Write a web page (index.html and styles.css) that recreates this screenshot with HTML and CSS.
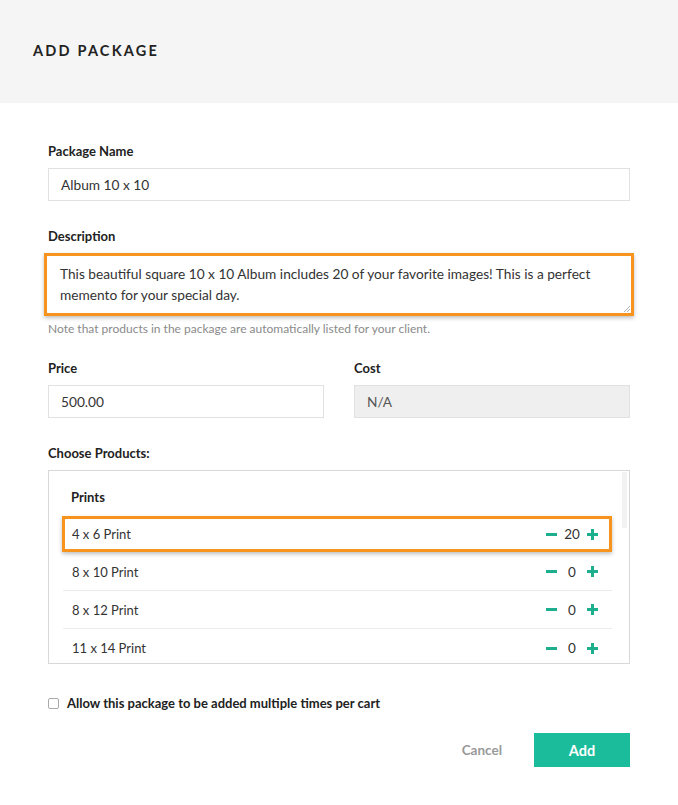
FILE: index.html
```html
<!DOCTYPE html>
<html>
<head>
<meta charset="utf-8">
<link rel="stylesheet" href="styles.css">
</head>
<body>
<div class="modal">
  <header class="header"><h1 class="title">ADD PACKAGE</h1></header>
  <main class="body">
    <div class="field">
      <label class="label">Package Name</label>
      <div class="input">Album 10 x 10</div>
    </div>
    <div class="field">
      <label class="label">Description</label>
      <div class="textarea hl">This beautiful square 10 x 10 Album includes 20 of your favorite images! This is a perfect memento for your special day.
        <svg class="grip" width="7" height="7" viewBox="0 0 7 7"><path d="M1 7L7 1M4 7L7 4" stroke="#999" stroke-width="0.8"/></svg>
      </div>
      <div class="note">Note that products in the package are automatically listed for your client.</div>
    </div>
    <div class="row2">
      <div class="field col">
        <label class="label">Price</label>
        <div class="input">500.00</div>
      </div>
      <div class="field col">
        <label class="label">Cost</label>
        <div class="input disabled">N/A</div>
      </div>
    </div>
    <div class="field">
      <label class="label">Choose Products:</label>
      <div class="products">
        <div class="scroll"></div>
        <div class="group">Prints</div>
        <div class="prod hl-row"><span>4 x 6 Print</span><span class="stepper"><span class="minus"></span><span class="qty">20</span><span class="plus"></span></span></div>
        <div class="prod"><span>8 x 10 Print</span><span class="stepper"><span class="minus"></span><span class="qty">0</span><span class="plus"></span></span></div>
        <div class="prod"><span>8 x 12 Print</span><span class="stepper"><span class="minus"></span><span class="qty">0</span><span class="plus"></span></span></div>
        <div class="prod last"><span>11 x 14 Print</span><span class="stepper"><span class="minus"></span><span class="qty">0</span><span class="plus"></span></span></div>
      </div>
    </div>
    <div class="check"><span class="box"></span><span>Allow this package to be added multiple times per cart</span></div>
    <div class="actions"><span class="cancel">Cancel</span><span class="add">Add</span></div>
  </main>
</div>
</body>
</html>
```
FILE: styles.css
```css
* { box-sizing: border-box; }
body { margin: 0; background: #fff; font-family: Lato, "Liberation Sans", sans-serif; color: #333; font-size: 13.7px; }
.modal { width: 678px; height: 805px; }
.header { background: #f5f5f5; height: 103px; padding: 42px 33px 0; }
.title { margin: 0; font-size: 14.5px; font-weight: 700; letter-spacing: 2.2px; color: #222; line-height: 18px; }
.body { padding: 40px 48px 0; }
.label { display: block; font-weight: 700; font-size: 13px; color: #222; line-height: 16px; margin-bottom: 9px; }
.input { height: 33px; border: 1px solid #e1e1e1; padding: 0 12px; line-height: 31px; font-size: 13.7px; color: #333; margin-bottom: 27px; }
.input.disabled { background: #efefef; color: #555; }
.textarea { position: relative; margin: 0 -4px; border: 3px solid #f7941d; box-shadow: 0 2px 4px rgba(0,0,0,0.25); padding: 7px 13px; height: 63px; line-height: 21px; font-size: 13.7px; color: #333; }
.grip { position: absolute; right: 1px; bottom: 1px; }
.note { font-size: 12px; color: #8a8a8a; margin-top: 5px; line-height: 16px; margin-bottom: 23px; }
.row2 { display: flex; gap: 30px; }
.col { flex: 1; }
.products { position: relative; border: 1px solid #d8d8d8; height: 194px; padding: 16px 17px 0 14px; overflow: hidden; margin-bottom: 31px; }
.scroll { position: absolute; right: 2px; top: 1px; width: 5px; height: 56px; background: #f2f2f2; }
.group { font-weight: 700; font-size: 13px; color: #222; padding-left: 8px; line-height: 20px; margin-bottom: 9px; }
.prod { display: flex; justify-content: space-between; align-items: center; height: 38px; padding: 0 14px 0 9px; border-bottom: 1px solid #ececec; font-size: 13px; color: #333; }
.prod.last { border-bottom: none; }
.hl-row { height: 36px; border: 3px solid #f7941d; box-shadow: 0 2px 4px rgba(0,0,0,0.25); padding: 0 11px 0 7px; margin: 0 0 1px -1px; }
.stepper { display: flex; align-items: center; }
.minus { width: 11px; height: 3px; background: #1dae8e; }
.plus { width: 11px; height: 11px; position: relative; }
.plus::before { content: ""; position: absolute; left: 0; top: 4px; width: 11px; height: 3px; background: #1dae8e; }
.plus::after { content: ""; position: absolute; left: 4px; top: 0; width: 3px; height: 11px; background: #1dae8e; }
.qty { width: 30px; text-align: center; font-size: 13.5px; color: #333; }
.check { display: flex; align-items: center; gap: 8px; font-weight: 700; font-size: 13px; color: #222; }
.box { width: 11px; height: 11px; border: 1px solid #aaa; border-radius: 2px; }
.actions { display: flex; justify-content: flex-end; align-items: center; margin-top: 22px; }
.cancel { color: #999; font-weight: 700; font-size: 13.5px; margin-right: 32px; }
.add { width: 96px; height: 34px; background: #1abc9c; color: #fff; font-weight: 700; font-size: 14.5px; display: flex; align-items: center; justify-content: center; }
```
